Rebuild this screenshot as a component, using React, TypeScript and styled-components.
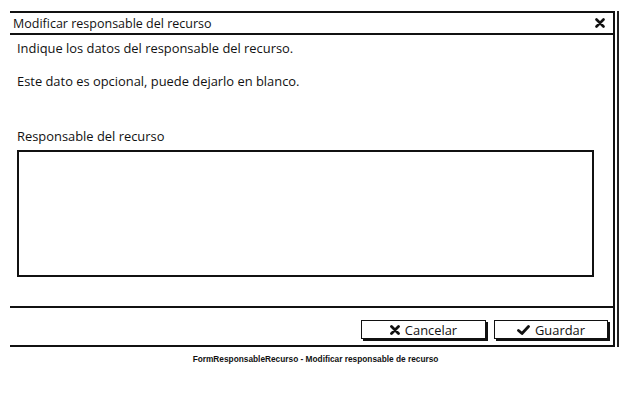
import React from "react";
import styled, { createGlobalStyle } from "styled-components";

const Global = createGlobalStyle`
  html, body { margin: 0; padding: 0; background: #fff; }
  body { width: 631px; height: 403px; overflow: hidden; }
  *, *::before, *::after { box-sizing: border-box; }
`;

const hand = `"Open Sans", "DejaVu Sans", sans-serif`;

const Page = styled.div`
  display: flex;
  flex-direction: column;
  padding: 11px 0 0 10px;
`;

const Window = styled.div`
  width: 605px;
  height: 336px;
  border-top: 2px solid #111;
  border-bottom: 2px solid #111;
  border-right: 2px solid #111;
  box-shadow: 2px 0 0 #fff, 4px 0 0 #222;
  display: flex;
  flex-direction: column;
  font-family: ${hand};
  color: #111;
`;

const TitleBar = styled.div`
  height: 22px;
  border-bottom: 2px solid #111;
  display: flex;
  align-items: center;
  justify-content: space-between;
  padding: 0 8px 0 3px;
  font-size: 12.5px;
`;

const CloseIcon = styled.svg`
  width: 10px;
  height: 10px;
`;

const Body = styled.div`
  flex: 1;
  display: flex;
  flex-direction: column;
  padding: 5px 0 0 7px;
  font-size: 12.9px;
`;

const Line = styled.div<{ $gap?: number }>`
  margin-top: ${(p) => p.$gap ?? 0}px;
  line-height: 17px;
`;

const TextBox = styled.div`
  margin-top: 5px;
  width: 577px;
  height: 127px;
  border: 2px solid #111;
`;

const Footer = styled.div`
  height: 39px;
  border-top: 2px solid #111;
  display: flex;
  justify-content: flex-end;
  align-items: flex-start;
  gap: 8px;
  padding: 12px 5px 0 0;
`;

const Button = styled.div<{ $w: number }>`
  width: ${(p) => p.$w}px;
  height: 19px;
  border: 1px solid #111;
  box-shadow: 2px 2px 0 #111;
  display: flex;
  align-items: center;
  justify-content: center;
  gap: 5px;
  font-size: 12.9px;
  font-family: ${hand};
`;

const Caption = styled.div`
  width: 631px;
  margin-left: -10px;
  margin-top: 7px;
  text-align: center;
  font-family: "Liberation Sans", Arial, sans-serif;
  font-weight: bold;
  font-size: 8.3px;
  color: #111;
`;

export default function App() {
  return (
    <>
      <Global />
      <Page>
        <Window>
          <TitleBar>
            <span>Modificar responsable del recurso</span>
            <CloseIcon viewBox="0 0 10 10">
              <path d="M1.5 1.5 L8.5 8.5 M8.5 1.5 L1.5 8.5" stroke="#111" strokeWidth="2.6" strokeLinecap="round" />
            </CloseIcon>
          </TitleBar>
          <Body>
            <Line>Indique los datos del responsable del recurso.</Line>
            <Line $gap={16}>Este dato es opcional, puede dejarlo en blanco.</Line>
            <Line $gap={38}>Responsable del recurso</Line>
            <TextBox />
          </Body>
          <Footer>
            <Button $w={125}>
              <svg width="10" height="10" viewBox="0 0 10 10">
                <path d="M1.5 1.5 L8.5 8.5 M8.5 1.5 L1.5 8.5" stroke="#111" strokeWidth="2.8" strokeLinecap="round" />
              </svg>
              Cancelar
            </Button>
            <Button $w={114}>
              <svg width="13" height="10" viewBox="0 0 13 10">
                <path d="M1.5 5.5 L5 8.5 L11.5 1.5" stroke="#111" strokeWidth="2.8" fill="none" strokeLinecap="round" strokeLinejoin="round" />
              </svg>
              Guardar
            </Button>
          </Footer>
        </Window>
        <Caption>FormResponsableRecurso - Modificar responsable de recurso</Caption>
      </Page>
    </>
  );
}
